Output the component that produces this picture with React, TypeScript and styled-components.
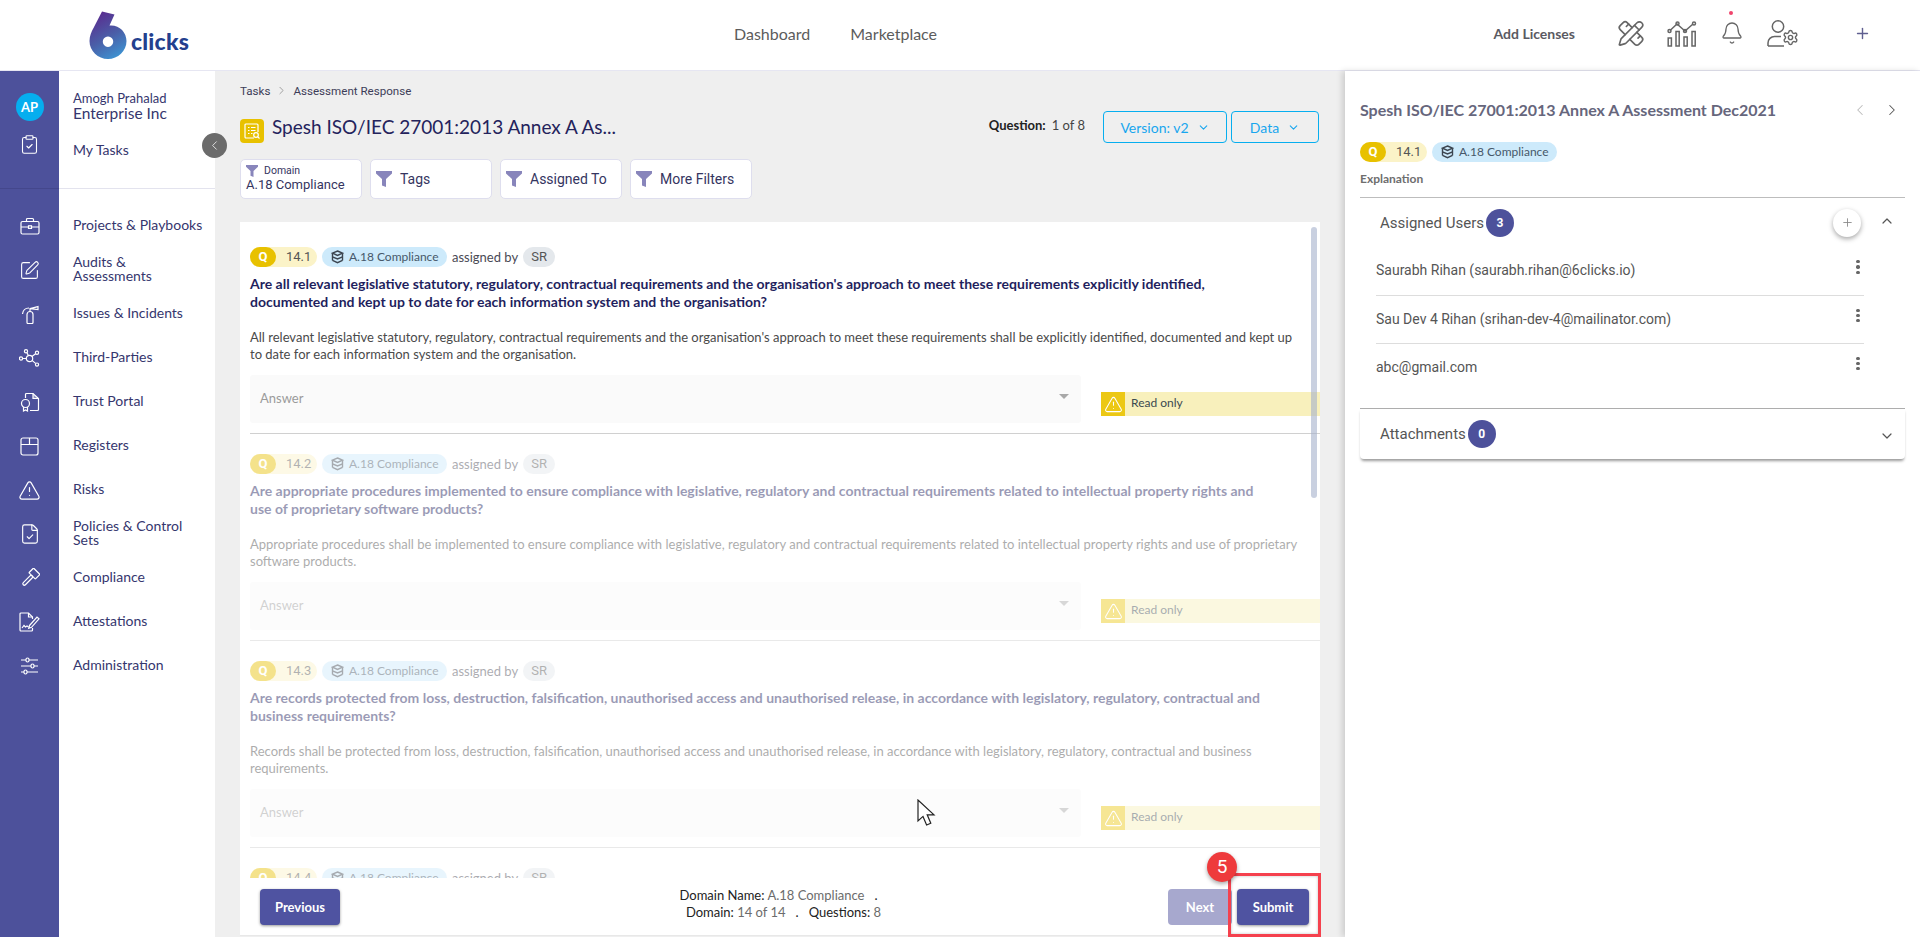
import React from "react";
import styled, { createGlobalStyle } from "styled-components";
import {
  ClipboardCheck, SquarePen, TriangleAlert, FileCheck,
  PencilRuler, Bell, Settings, ChevronLeft, ChevronRight, ChevronDown, ChevronUp, Plus,
} from "lucide-react";

const Global = createGlobalStyle`
  html, body { margin: 0; padding: 0; height: 937px; overflow: hidden; background: #fff; }
  * { box-sizing: border-box; }
  body { font-family: "Lato", "Liberation Sans", sans-serif; }
`;

const Page = styled.div`position: relative; width: 1920px; height: 937px; display: flex; flex-direction: column; overflow: hidden;`;

const TopBar = styled.header`height: 71px; flex: none; display: flex; align-items: center; padding: 0 49px 4px 89px; background: #fff; border-bottom: 1px solid #e6e6f2;`;
const LogoWrap = styled.div`display: flex; flex: none; align-self: flex-start; align-items: flex-end; width: 101px; height: 50px; gap: 4px; margin-top: 10px;`;
const LogoText = styled.span`font: 900 23px/26px "Lato", sans-serif; color: #23408e; letter-spacing: 0.2px; margin-bottom: 6px;`;
const TopNav = styled.nav`display: flex; gap: 40px; margin-left: 544px; font-size: 16px; color: #5c5c5c;`;
const TopRight = styled.div`margin-left: auto; display: flex; align-items: center; color: #666;`;
const AddLicenses = styled.span`font-size: 14px; font-weight: 700; color: #5a5a62; margin-right: 42px;`;
const HeadIcon = styled.div<{ $w: number; $mr: number }>`position: relative; width: ${(p) => p.$w}px; height: 27px; margin-right: ${(p) => p.$mr}px; display: flex; align-items: center; justify-content: center;`;
const BellDot = styled.i`position: absolute; left: 9px; top: -9px; width: 4px; height: 4px; border-radius: 50%; background: #f0446c;`;

const Content = styled.div`flex: 1; min-height: 0; display: flex;`;

const Rail = styled.aside`width: 59px; flex: none; background: #4d519b; color: #fff; display: flex; flex-direction: column;`;
const RailTop = styled.div`height: 118px; flex: none; border-bottom: 1px solid #44478c; display: flex; flex-direction: column; align-items: center; padding-top: 22px; gap: 13px;`;
const Avatar = styled.div`width: 28px; height: 28px; border-radius: 50%; background: #06aeef; color: #fff; font: 700 13px/28px "Lato", sans-serif; text-align: center;`;
const RailList = styled.div`padding-top: 15px; display: flex; flex-direction: column;`;
const RailItem = styled.div`height: 44px; display: flex; align-items: center; justify-content: center;`;

const SideBar = styled.aside`position: relative; width: 156px; flex: none; background: #fff; color: #35366e;`;
const SideTop = styled.div`height: 118px; border-bottom: 1px solid #e3e3ee; padding: 20px 0 0 14px;`;
const UserName = styled.div`font-size: 13px; line-height: 15px;`;
const OrgName = styled.div`font-size: 15.5px; line-height: 16px; margin-top: -1px;`;
const MyTasks = styled.div`font-size: 14px; line-height: 16px; margin-top: 21px;`;
const SideList = styled.div`padding: 14px 0 0 14px;`;
const SideItem = styled.div`height: 44px; display: flex; align-items: center; font-size: 14px; line-height: 14px; padding-right: 9px;`;
const Collapse = styled.button`position: absolute; right: -12px; top: 62px; width: 25px; height: 25px; border-radius: 50%; border: 0; padding: 0; background: #6b6b6b; color: #fff; display: flex; align-items: center; justify-content: center; z-index: 2;`;

const Main = styled.main`width: 1130px; flex: none; background: #efefef; padding-left: 25px; display: flex; flex-direction: column;`;
const Crumbs = styled.div`display: flex; align-items: center; gap: 5px; padding-top: 13px; height: 26px; font: 400 11.6px/14px "Roboto", sans-serif; color: #3d3d58;`;
const TitleRow = styled.div`display: flex; height: 32px; margin-top: 14px; width: 1079px;`;
const TitleIcon = styled.div`width: 24px; height: 24px; border-radius: 4px; background: #e8c100; align-self: flex-end; margin-right: 8px; display: flex; align-items: center; justify-content: center;`;
const Title = styled.h1`margin: 0; font: 400 19px/32px "Lato", sans-serif; color: #24235c;`;
const QCount = styled.div`margin-left: auto; margin-right: 14px; font-size: 13px; line-height: 28px; color: #444; b { color: #222; margin-right: 6px; }`;
const Outline = styled.button<{ $w: number }>`width: ${(p) => p.$w}px; height: 32px; margin-left: 4px; border: 1px solid #06aeef; border-radius: 4px; background: transparent; color: #18a6ee; font: 400 14px "Lato", sans-serif; display: flex; align-items: center; justify-content: center; gap: 8px; padding: 0;`;
const Filters = styled.div`display: flex; gap: 8px; margin-top: 16px; height: 40px;`;
const FilterBtn = styled.div`width: 122px; height: 40px; background: #fff; border: 1px solid #dedeee; border-radius: 5px; display: flex; align-items: center; gap: 8px; padding-left: 5px; font: 400 14px "Roboto", sans-serif; color: #35355f;`;
const DomainBtn = styled.div`width: 122px; height: 40px; background: #fff; border: 1px solid #dedeee; border-radius: 5px; padding: 4px 0 0 5px; font: 400 13px/16px "Roboto", sans-serif; color: #35355f;`;
const DomainLabel = styled.div`display: flex; align-items: center; gap: 6px; font-size: 10.5px; line-height: 13px;`;

const List = styled.div`position: relative; width: 1080px; height: 656px; margin-top: 23px; background: #fff; overflow: hidden; padding: 25px 0 0 10px;`;
const Thumb = styled.div`position: absolute; right: 3px; top: 5px; width: 6px; height: 271px; border-radius: 3px; background: rgba(165, 177, 203, 0.6); z-index: 1;`;
const Block = styled.section<{ $faded?: boolean }>`height: 207px; opacity: ${(p) => (p.$faded ? 0.45 : 1)};`;
const PillRow = styled.div`display: flex; align-items: center; gap: 5px; height: 20px; font: 400 13px/20px "Lato", sans-serif; color: #4a4a55;`;
const QPill = styled.div`display: flex; width: 67px; height: 20px; border-radius: 10px; background: #fbf3c8; font: 400 13px/20px "Roboto", sans-serif; color: #555;`;
const QMark = styled.span`width: 26px; height: 20px; border-radius: 10px; background: #e8c100; color: #fff; font-weight: 700; text-align: center; margin-right: 10px;`;
const DomainPill = styled.div`display: flex; align-items: center; gap: 5px; width: 125px; height: 20px; padding-left: 9px; border-radius: 10px; background: #cdeafb; color: #46586a; font-size: 12px;`;
const Initials = styled.span`height: 20px; width: 32px; text-align: center; border-radius: 10px; background: #e4e8ec; color: #555; font-family: "Roboto", sans-serif;`;
const QText = styled.h3`margin: 8px 0 0; width: 1015px; font: 700 14px/18px "Lato", sans-serif; color: #1f1f5e;`;
const QDesc = styled.p`margin: 18px 0 0; width: 1050px; font: 400 13px/17px "Lato", sans-serif; color: #4a4a4a;`;
const AnswerRow = styled.div`display: flex; gap: 20px; margin-top: 12px; height: 48px;`;
const AnswerBox = styled.div`width: 831px; height: 48px; border-radius: 3px; background: #fafafa; display: flex; align-items: center; justify-content: space-between; padding: 0 12px 2px 10px; font-size: 13px; color: #9a9a9a;`;
const Caret = styled.i`width: 0; height: 0; border-left: 5px solid transparent; border-right: 5px solid transparent; border-top: 5px solid #a8a8a8; margin-top: -3px;`;
const ReadOnly = styled.div`flex: 1; height: 24px; margin-top: 17px; background: #f8f0bc; display: flex; align-items: center; font-size: 12px; color: #3c4a50;`;
const ReadLabel = styled.span`margin-bottom: 3px;`;
const WarnBox = styled.div`width: 24px; height: 24px; background: #ecc814; color: #fff; margin-right: 6px; display: flex; align-items: center; justify-content: center;`;
const Divider = styled.hr`margin: 10px 0 0; border: 0; border-top: 1px solid #d0d0d0;`;

const Footer = styled.div`width: 1080px; height: 58px; background: #fff; border-bottom: 1px solid #e8e8e8; display: flex; align-items: flex-start; padding: 11px 11px 0 20px;`;
const FootBtn = styled.button<{ $w: number; $off?: boolean; $gap?: number }>`width: ${(p) => p.$w}px; height: 36px; margin-left: ${(p) => p.$gap ?? 0}px; border: 0; border-radius: 4px; padding: 0; background: ${(p) => (p.$off ? "#a7a8ce" : "#4f53a1")}; color: #fff; font: 700 13px "Lato", sans-serif; box-shadow: ${(p) => (p.$off ? "none" : "0 1px 3px rgba(0,0,0,.4)")};`;
const FootInfo = styled.div`flex: 1; text-align: center; padding-left: 59px; margin-top: -2px; font: 400 13px/17px "Lato", sans-serif; color: #222; span { color: #6c6c6c; } em { font-style: normal; margin: 0 10px; }`;

const Panel = styled.aside`flex: 1; background: #fff; box-shadow: -3px 0 6px rgba(0, 0, 0, 0.14); padding: 27px 15px 0; position: relative;`;
const PanelHead = styled.div`display: flex; align-items: center; height: 24px; color: #333;`;
const PanelTitle = styled.h2`margin: 0; font: 700 16px/24px "Lato", sans-serif; color: #66667c;`;
const PanelNav = styled.div`margin-left: auto; display: flex; gap: 14px; margin-right: 4px;`;
const PanelPills = styled(PillRow)`margin-top: 20px;`;
const Explain = styled.div`margin-top: 10px; font: 700 12px/14px "Lato", sans-serif; color: #6e6e6e;`;
const Accordion = styled.div`margin-top: 11px; border-top: 1px solid #bdbdbd; height: 211px;`;
const AccordionLast = styled.div`border-top: 1px solid #adadad; border-radius: 0 0 4px 4px; box-shadow: 0 3px 3px -1px rgba(0, 0, 0, 0.4); height: 51px;`;
const AccHead = styled.div<{ $h: number }>`height: ${(p) => p.$h}px; display: flex; align-items: center; padding: 0 10px 0 20px; font: 400 15px "Roboto", sans-serif; color: #555;`;
const Count = styled.span`width: 28px; height: 28px; border-radius: 50%; margin-left: 2px; background: #4d519b; color: #fff; font: 700 12px/28px "Roboto", sans-serif; text-align: center;`;
const RoundAdd = styled.button`width: 28px; height: 28px; margin-left: auto; margin-right: 18px; border: 0; border-radius: 50%; padding: 0; background: #fff; color: #888; box-shadow: 0 2px 5px rgba(0, 0, 0, 0.35); display: flex; align-items: center; justify-content: center;`;
const AccChevron = styled.span<{ $auto?: boolean; $up?: boolean }>`width: 16px; height: 16px; color: #555; display: flex; margin-left: ${(p) => (p.$auto ? "auto" : "0")}; margin-bottom: ${(p) => (p.$up ? "4px" : "0")}; margin-top: ${(p) => (p.$auto ? "4px" : "0")};`;
const UserRow = styled.div`margin-left: 16px; width: 488px; height: 48px; display: flex; align-items: center; justify-content: space-between; padding-bottom: 2px; font: 400 14px "Roboto", sans-serif; color: #555; & + & { border-top: 1px solid #ddd; }`;
const Dots = styled.span`width: 12px; height: 14px; margin-bottom: 6px; display: flex; flex-direction: column; align-items: center; justify-content: space-between; i { width: 3.4px; height: 3.4px; border-radius: 50%; background: #666; }`;

const RedBox = styled.div`position: absolute; left: 1228px; top: 873px; width: 93px; height: 64px; border: 3px solid #f5414e; box-shadow: inset 0 0 3px rgba(0,0,0,.25); z-index: 4;`;
const StepBadge = styled.div`position: absolute; left: 1207px; top: 852px; width: 30px; height: 30px; border-radius: 50%; background: #ee3a3c; color: #fff; font: 400 19px/30px "Roboto", sans-serif; text-align: center; box-shadow: 0 2px 4px rgba(0,0,0,.35); z-index: 5;`;
const Cursor = styled.svg`position: absolute; left: 917px; top: 799px; z-index: 6;`;

const W = { color: "#fff", strokeWidth: 1.25 };

const BriefcaseIcon = () => (
  <svg width="20" height="18" viewBox="0 0 20 18" fill="none" stroke="#fff" strokeWidth="1.2">
    <rect x="1" y="4.5" width="18" height="12.5" rx="1.5" />
    <path d="M6.5 4.5V2.5a1 1 0 0 1 1-1h5a1 1 0 0 1 1 1v2M1 10h7.5M11.5 10H19" />
    <rect x="8.5" y="8.8" width="3" height="2.6" />
  </svg>
);
const Extinguisher = () => (
  <svg width="18" height="19" viewBox="0 0 18 19" fill="none" stroke="#fff" strokeWidth="1.2">
    <path d="M6 9.5a3 3 0 0 1 6 0V17.5a1 1 0 0 1-1 1H7a1 1 0 0 1-1-1z" />
    <path d="M9 6.5V3M9 3.6L17 1.6v3L9 3.6M8 3C4.5 3 2 5 1.5 9" />
  </svg>
);
const Nodes = () => (
  <svg width="21" height="18" viewBox="0 0 21 18" fill="none" stroke="#fff" strokeWidth="1.2">
    <circle cx="10.5" cy="9.5" r="3.2" /><circle cx="7" cy="2.2" r="1.6" /><circle cx="18" cy="3.8" r="1.6" />
    <circle cx="18" cy="15.6" r="1.6" /><circle cx="2" cy="9.5" r="1.6" />
    <path d="M8 3.8l1.3 2.8M16.6 4.8l-3.7 2.8M13 11.4l3.6 3M3.6 9.5h3.7" />
  </svg>
);
const TrustDoc = () => (
  <svg width="20" height="20" viewBox="0 0 20 20" fill="none" stroke="#fff" strokeWidth="1.2">
    <path d="M5.5 6V2.5a1 1 0 0 1 1-1H13l5.5 5v11a1 1 0 0 1-1 1H10" /><path d="M13 1.5v5h5.5" fill="#fff" fillOpacity=".4" />
    <circle cx="5.5" cy="11.5" r="4" /><path d="M3.5 15v4l2-1 2 1v-4" />
  </svg>
);
const BoxIcon = () => (
  <svg width="19" height="19" viewBox="0 0 19 19" fill="none" stroke="#fff" strokeWidth="1.2">
    <rect x="1" y="1" width="17" height="17" rx="2" /><path d="M1 7.5h17M9.5 1v6.5" />
  </svg>
);
const GavelIcon = () => (
  <svg width="20" height="20" viewBox="0 0 20 20" fill="none" stroke="#fff" strokeWidth="1.2">
    <g transform="rotate(45 10 10)">
      <rect x="5.5" y="0.5" width="9" height="6.5" rx="0.6" />
      <rect x="8.5" y="7" width="3" height="12.5" rx="1.5" />
    </g>
  </svg>
);
const AttestIcon = () => (
  <svg width="21" height="20" viewBox="0 0 21 20" fill="none" stroke="#fff" strokeWidth="1.2">
    <path d="M13.5 16v2a1 1 0 0 1-1 1H2a1 1 0 0 1-1-1V2a1 1 0 0 1 1-1h7.5l4 4v2" />
    <path d="M9.5 1v4h4" />
    <path d="M3 16l2-2.5 1.5 1.5 1.5-1 1.5 1" />
    <path d="M10.5 13.5L18 5l2 1.8-7.5 8.5-2.8 1z" />
  </svg>
);
const Sliders = () => (
  <svg width="19" height="18" viewBox="0 0 19 18" fill="none" stroke="#fff" strokeWidth="1.2">
    <path d="M1 3h5M9 3h9M1 9h10M14 9h4M1 15h3M7 15h11" />
    <rect x="6" y="1" width="3" height="4" rx="1.5" /><rect x="11" y="7" width="3" height="4" rx="1.5" /><rect x="4" y="13" width="3" height="4" rx="1.5" />
  </svg>
);
const ChartIcon = () => (
  <svg width="30" height="27" viewBox="0 0 30 27" fill="none" stroke="#666" strokeWidth="1.5">
    <rect x="1.2" y="18" width="3.2" height="8" /><rect x="9" y="11.5" width="3.2" height="14.5" /><rect x="17" y="17" width="3.2" height="9" /><rect x="25" y="11.5" width="3.2" height="14.5" />
    <path d="M3 10.5l7-6.5 8 7 8-7" /><circle cx="2.5" cy="11" r="1.5" /><circle cx="10.5" cy="3.5" r="1.5" /><circle cx="18" cy="11" r="1.5" /><circle cx="27" cy="3.5" r="1.5" />
  </svg>
);
const UserGear = () => (
  <svg width="32" height="27" viewBox="0 0 32 27" fill="none" stroke="#666" strokeWidth="1.5">
    <circle cx="11" cy="6.5" r="5.7" />
    <path d="M1 26v-3a6.5 6.5 0 0 1 6.5-6.5H14M1 26h16" />
    <Settings x={15} y={9} width={17} height={17} stroke="#666" strokeWidth={2} />
  </svg>
);
const Funnel = ({ s = 16 }: { s?: number }) => (
  <svg width={s} height={s} viewBox="0 0 16 16" fill="#8885bb"><path d="M0 0h16v2.4L10 8v8l-4-1.6V8L0 2.4z" /></svg>
);
const Stack = () => (
  <svg width="13" height="14" viewBox="0 0 13 14" fill="none" stroke="#3c4550" strokeWidth="1.4">
    <path d="M6.5 1l5 2.2-5 2.2-5-2.2zM1.5 6.8l5 2.2 5-2.2M1.5 10.4l5 2.3 5-2.3" /><path d="M1.5 3.2v7.2M11.5 3.2v7.2" />
  </svg>
);
const Logo = () => (
  <svg width="38" height="50" viewBox="0 0 38 50">
    <defs>
      <linearGradient id="six" x1="0.25" y1="0" x2="0.7" y2="1">
        <stop offset="0" stopColor="#5a2a8e" /><stop offset="0.55" stopColor="#4a5fa8" /><stop offset="1" stopColor="#3d93d2" />
      </linearGradient>
    </defs>
    <path fillRule="evenodd" fill="url(#six)" d="M13 1.5L25.5 4.5L20.5 15.5C30 14.5 37.5 22 37.5 31C37.5 41 29 49 19 49C9 49 0.5 41 0.5 31C0.5 26 2.5 21.5 4.5 18ZM19 26.5a5.2 5.2 0 1 0 0.01 0Z" />
  </svg>
);
const Sheet = () => (
  <svg width="18" height="18" viewBox="0 0 18 18" fill="none" stroke="#fff" strokeWidth="1.2">
    <path d="M11 16H3a1 1 0 0 1-1-1V3a1 1 0 0 1 1-1h11a1 1 0 0 1 1 1v7" />
    <path d="M5 5.5h1.5M8 5.5h4.5M5 8.5h1.5M8 8.5h4.5M5 11.5h1.5M8 11.5h1.5" /><circle cx="13" cy="13" r="2.3" /><path d="M14.8 14.8l1.7 1.7" />
  </svg>
);

const rail = [
  <BriefcaseIcon />, <SquarePen size={21} {...W} />, <Extinguisher />, <Nodes />, <TrustDoc />,
  <BoxIcon />, <TriangleAlert size={23} {...W} />, <FileCheck size={22} {...W} />, <GavelIcon />, <AttestIcon />, <Sliders />,
];
const nav = ["Projects & Playbooks", "Audits & Assessments", "Issues & Incidents", "Third-Parties", "Trust Portal", "Registers", "Risks", "Policies & Control Sets", "Compliance", "Attestations", "Administration"];

const blocks = [
  { n: "14.1", q: "Are all relevant legislative statutory, regulatory, contractual requirements and the organisation's approach to meet these requirements explicitly identified, documented and kept up to date for each information system and the organisation?", d: "All relevant legislative statutory, regulatory, contractual requirements and the organisation's approach to meet these requirements shall be explicitly identified, documented and kept up to date for each information system and the organisation." },
  { n: "14.2", q: "Are appropriate procedures implemented to ensure compliance with legislative, regulatory and contractual requirements related to intellectual property rights and use of proprietary software products?", d: "Appropriate procedures shall be implemented to ensure compliance with legislative, regulatory and contractual requirements related to intellectual property rights and use of proprietary software products." },
  { n: "14.3", q: "Are records protected from loss, destruction, falsification, unauthorised access and unauthorised release, in accordance with legislatory, regulatory, contractual and business requirements?", d: "Records shall be protected from loss, destruction, falsification, unauthorised access and unauthorised release, in accordance with legislatory, regulatory, contractual and business requirements." },
];

const Pills = ({ n }: { n: string }) => (
  <>
    <QPill><QMark>Q</QMark>{n}</QPill>
    <DomainPill><Stack />A.18 Compliance</DomainPill>
  </>
);

const AssignedRow = ({ n }: { n: string }) => (
  <PillRow><Pills n={n} /><span>assigned by</span><Initials>SR</Initials></PillRow>
);

export default function App() {
  return (
    <Page>
      <Global />
      <TopBar>
        <LogoWrap><Logo /><LogoText>clicks</LogoText></LogoWrap>
        <TopNav><span>Dashboard</span><span>Marketplace</span></TopNav>
        <TopRight>
          <AddLicenses>Add Licenses</AddLicenses>
          <HeadIcon $w={28} $mr={22}><PencilRuler size={29} strokeWidth={1.4} /></HeadIcon>
          <HeadIcon $w={30} $mr={23}><ChartIcon /></HeadIcon>
          <HeadIcon $w={24} $mr={23}><BellDot /><Bell size={30} strokeWidth={1.3} /></HeadIcon>
          <HeadIcon $w={32} $mr={55}><UserGear /></HeadIcon>
          <HeadIcon $w={17} $mr={0}><Plus size={27} strokeWidth={2} color="#5f5f90" /></HeadIcon>
        </TopRight>
      </TopBar>
      <Content>
        <Rail>
          <RailTop>
            <Avatar>AP</Avatar>
            <ClipboardCheck size={21} {...W} />
          </RailTop>
          <RailList>
            {rail.map((icon, i) => <RailItem key={i}>{icon}</RailItem>)}
          </RailList>
        </Rail>
        <SideBar>
          <SideTop>
            <UserName>Amogh Prahalad</UserName>
            <OrgName>Enterprise Inc</OrgName>
            <MyTasks>My Tasks</MyTasks>
          </SideTop>
          <SideList>
            {nav.map((t) => <SideItem key={t}>{t}</SideItem>)}
          </SideList>
          <Collapse><ChevronLeft size={15} strokeWidth={1.2} /></Collapse>
        </SideBar>
        <Main>
          <Crumbs><span>Tasks</span><ChevronRight size={13} strokeWidth={1.2} color="#777" /><span>Assessment Response</span></Crumbs>
          <TitleRow>
            <TitleIcon><Sheet /></TitleIcon>
            <Title>Spesh ISO/IEC 27001:2013 Annex A As...</Title>
            <QCount><b>Question:</b>1 of 8</QCount>
            <Outline $w={124}>Version: v2<ChevronDown size={13} strokeWidth={2} /></Outline>
            <Outline $w={88}>Data<ChevronDown size={13} strokeWidth={2} /></Outline>
          </TitleRow>
          <Filters>
            <DomainBtn>
              <DomainLabel><Funnel s={12} />Domain</DomainLabel>
              A.18 Compliance
            </DomainBtn>
            <FilterBtn><Funnel />Tags</FilterBtn>
            <FilterBtn><Funnel />Assigned To</FilterBtn>
            <FilterBtn><Funnel />More Filters</FilterBtn>
          </Filters>
          <List>
            <Thumb />
            {blocks.map((b, i) => (
              <Block key={b.n} $faded={i > 0}>
                <AssignedRow n={b.n} />
                <QText>{b.q}</QText>
                <QDesc>{b.d}</QDesc>
                <AnswerRow>
                  <AnswerBox>Answer<Caret /></AnswerBox>
                  <ReadOnly><WarnBox><TriangleAlert size={19} strokeWidth={1.3} /></WarnBox><ReadLabel>Read only</ReadLabel></ReadOnly>
                </AnswerRow>
                <Divider />
              </Block>
            ))}
            <Block $faded><AssignedRow n="14.4" /></Block>
          </List>
          <Footer>
            <FootBtn $w={80}>Previous</FootBtn>
            <FootInfo>
              Domain Name: <span>A.18 Compliance</span><em>.</em><br />
              Domain: <span>14 of 14</span><em>.</em>Questions: <span>8</span>
            </FootInfo>
            <FootBtn $w={64} $off>Next</FootBtn>
            <FootBtn $w={72} $gap={5}>Submit</FootBtn>
          </Footer>
        </Main>
        <Panel>
          <PanelHead>
            <PanelTitle>Spesh ISO/IEC 27001:2013 Annex A Assessment Dec2021</PanelTitle>
            <PanelNav>
              <ChevronLeft size={18} strokeWidth={1.4} color="#bbb" />
              <ChevronRight size={18} strokeWidth={1.4} color="#555" />
            </PanelNav>
          </PanelHead>
          <PanelPills><Pills n="14.1" /></PanelPills>
          <Explain>Explanation</Explain>
          <Accordion>
            <AccHead $h={49}>
              Assigned Users<Count>3</Count>
              <RoundAdd><Plus size={13} strokeWidth={1.6} /></RoundAdd>
              <AccChevron $up><ChevronUp size={16} strokeWidth={1.8} /></AccChevron>
            </AccHead>
            {["Saurabh Rihan (saurabh.rihan@6clicks.io)", "Sau Dev 4 Rihan (srihan-dev-4@mailinator.com)", "abc@gmail.com"].map((u) => (
              <UserRow key={u}>{u}<Dots><i /><i /><i /></Dots></UserRow>
            ))}
          </Accordion>
          <AccordionLast>
            <AccHead $h={50}>
              Attachments<Count>0</Count>
              <AccChevron $auto><ChevronDown size={16} strokeWidth={1.8} /></AccChevron>
            </AccHead>
          </AccordionLast>
        </Panel>
      </Content>
      <RedBox />
      <StepBadge>5</StepBadge>
      <Cursor width="19" height="28" viewBox="0 0 19 28">
        <path d="M1 1v21l5-4.6 3.6 8.6 4.2-1.8-3.6-8.4H17z" fill="#fff" stroke="#222" strokeWidth="1.2" />
      </Cursor>
    </Page>
  );
}
